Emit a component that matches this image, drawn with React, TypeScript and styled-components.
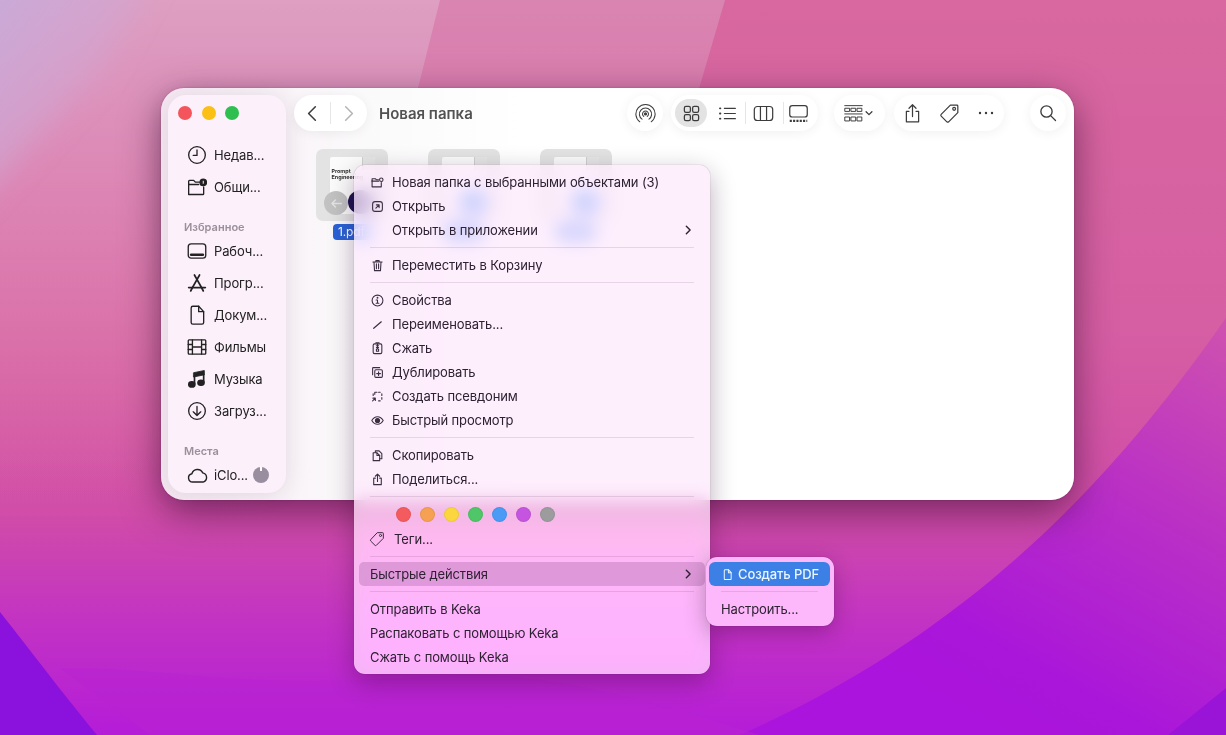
import React from "react";
import styled, { createGlobalStyle } from "styled-components";

const Global = createGlobalStyle`
  html, body { margin: 0; padding: 0; height: 100%; overflow: hidden; }
  body { font-family: "Inter", "Liberation Sans", sans-serif; letter-spacing: -0.12px; -webkit-font-smoothing: antialiased; }
  * { box-sizing: border-box; }
`;

const Desktop = styled.div`
  position: relative;
  width: 1226px;
  height: 735px;
  overflow: hidden;
  background: #c83cc0;
`;
const Wallpaper = styled.svg`
  position: absolute;
  inset: 0;
  width: 1226px;
  height: 735px;
`;
const Window = styled.div`
  position: absolute;
  left: 161px;
  top: 88px;
  width: 913px;
  height: 412px;
  display: flex;
  padding: 7px;
  border-radius: 23px;
  background: linear-gradient(90deg, #f6e9f3 0%, #fbfafb 22%, #ffffff 40%);
  box-shadow: 0 12px 38px rgba(30, 0, 30, 0.52), 0 0 2px rgba(60, 0, 60, 0.3);
`;
const Sidebar = styled.aside`
  width: 118px;
  height: 398px;
  flex: none;
  border-radius: 18px;
  background: #fcf0fa;
  box-shadow: 0 2px 22px rgba(60, 30, 60, 0.12);
  overflow: hidden;
`;
const Traffic = styled.div`
  height: 36px;
  display: flex;
  align-items: center;
  gap: 9.5px;
  padding-left: 10px;
  margin-bottom: 8px;
`;
const Light = styled.span<{ $c: string }>`
  width: 14px;
  height: 14px;
  border-radius: 50%;
  background: ${(p) => p.$c};
`;
const SideLabel = styled.div`
  height: 16px;
  margin-top: 16px;
  padding-left: 16px;
  line-height: 16px;
  font-size: 11px;
  font-weight: 600;
  letter-spacing: 0;
  color: #9a909c;
`;
const SideRow = styled.div`
  height: 32px;
  display: flex;
  align-items: center;
  gap: 6px;
  padding-left: 18px;
  font-size: 13px;
  color: #222;
  white-space: nowrap;
`;
const SideIcon = styled.span`
  width: 22px;
  flex: none;
  display: flex;
  justify-content: center;
  color: #222;
`;
const CloudPie = styled.span`
  width: 16px;
  height: 16px;
  margin-left: -1px;
  border-radius: 50%;
  background: conic-gradient(#fff 0 2%, #988e9f 2% 98%, #fff 98%);
`;
const Main = styled.main`
  flex: 1;
  min-width: 0;
  display: flex;
  flex-direction: column;
`;
const Toolbar = styled.div`
  height: 36px;
  padding: 0 1px 0 8px;
  display: flex;
  align-items: center;
`;
const Pill = styled.div<{ $ml?: number; $w?: number; $p?: string }>`
  height: 36px;
  border-radius: 18px;
  background: #fff;
  box-shadow: 0 2px 12px rgba(0, 0, 0, 0.06);
  display: flex;
  align-items: center;
  flex: none;
  color: #3a3a3a;
  margin-left: ${(p) => p.$ml ?? 0}px;
  width: ${(p) => (p.$w ? `${p.$w}px` : "auto")};
  padding: ${(p) => p.$p ?? "0"};
`;
const Title = styled.div`
  margin-left: 12px;
  flex: 1;
  font-size: 15px;
  font-weight: 600;
  letter-spacing: 0;
  color: #525252;
  white-space: nowrap;
`;
const Tool = styled.span<{ $w: number; $active?: boolean; $dim?: boolean; $pl?: number; $pr?: number }>`
  width: ${(p) => p.$w}px;
  height: 28px;
  flex: none;
  border-radius: 14px;
  display: flex;
  align-items: center;
  justify-content: center;
  padding-left: ${(p) => p.$pl ?? 0}px;
  padding-right: ${(p) => p.$pr ?? 0}px;
  background: ${(p) => (p.$active ? "#e3e3e3" : "transparent")};
  color: ${(p) => (p.$dim ? "#b4b4b4" : "#3c3c3c")};
`;
const ToolDivider = styled.span`
  width: 1px;
  height: 22px;
  margin: 0 1px 0 3px;
  background: #e6e6e6;
  flex: none;
`;
const Files = styled.div`
  display: flex;
  gap: 40px;
  margin-top: 18px;
  padding-left: 30px;
`;
const FileCell = styled.div`
  width: 72px;
  display: flex;
  flex-direction: column;
  align-items: center;
`;
const Tile = styled.div`
  position: relative;
  width: 72px;
  height: 72px;
  border-radius: 7px;
  background: #e3e3e3;
  display: flex;
  justify-content: center;
  padding-top: 8px;
`;
const Doc = styled.div`
  position: relative;
  width: 45px;
  height: 57px;
  background: #fbfbfb;
  border-radius: 2px;
  overflow: hidden;
  padding: 11px 0 0 2px;
  font-size: 5.4px;
  line-height: 6px;
  font-weight: 700;
  letter-spacing: 0;
  white-space: nowrap;
  color: #333;
`;
const Fold = styled.span`
  position: absolute;
  right: 0;
  top: 0;
  width: 13px;
  height: 13px;
  background: #e6e6e6;
  border-left: 1px solid #d0d0d0;
`;
const Blob = styled.span<{ $c: string }>`
  position: absolute;
  left: 18px;
  top: 33px;
  width: 26px;
  height: 24px;
  border-radius: 50%;
  background: ${(p) => p.$c};
`;
const BackBadge = styled.span`
  position: absolute;
  left: 8px;
  top: 42px;
  width: 24px;
  height: 24px;
  border-radius: 50%;
  background: #c2c2c2;
  color: #e4e4e4;
  display: flex;
  align-items: center;
  justify-content: center;
`;
const FileName = styled.div`
  margin-top: 3px;
  height: 16px;
  width: 38px;
  padding-left: 5px;
  border-radius: 4px;
  background: #2a62d6;
  color: #fff;
  font-size: 12px;
  line-height: 16px;
  white-space: nowrap;
  overflow: hidden;
`;
const Menu = styled.div`
  position: absolute;
  left: 354px;
  top: 165px;
  width: 356px;
  height: 509px;
  padding: 5px;
  border-radius: 11px;
  background: rgba(254, 233, 252, 0.74);
  backdrop-filter: blur(9px) saturate(1.6);
  box-shadow: 0 8px 26px rgba(40, 0, 40, 0.32), 0 0 1px rgba(40, 0, 40, 0.5);
  color: #2d2132;
  font-size: 13px;
`;
const Row = styled.div<{ $hi?: boolean; $pl?: number }>`
  height: 24px;
  display: flex;
  align-items: center;
  border-radius: 5px;
  padding: 0 12px 0 ${(p) => p.$pl ?? 11}px;
  white-space: nowrap;
  background: ${(p) => (p.$hi ? "rgba(120, 60, 120, 0.24)" : "transparent")};
`;
const RowIcon = styled.span`
  width: 22px;
  flex: none;
  display: flex;
  align-items: center;
  margin-left: -1px;
  margin-right: 1px;
  padding-left: 2px;
  color: #3a2e40;
`;
const TagIcon = styled(RowIcon)`
  padding-left: 0;
`;
const RowText = styled.span`
  flex: 1;
`;
const TagText = styled(RowText)`
  margin-left: 2px;
`;
const NoIconOffset = styled.div`
  padding-left: 22px;
`;
const Sep = styled.div`
  height: 1px;
  margin: 5px 11px;
  background: rgba(90, 50, 90, 0.14);
`;
const Dots = styled.div`
  height: 25px;
  display: flex;
  align-items: center;
  gap: 9px;
  padding-left: 36.5px;
`;
const Dot = styled.span<{ $c: string }>`
  width: 15px;
  height: 15px;
  border-radius: 50%;
  background: ${(p) => p.$c};
  box-shadow: inset 0 0 0 1px rgba(0, 0, 0, 0.06);
`;
const SubMenu = styled.div`
  position: absolute;
  left: 706px;
  top: 557px;
  width: 128px;
  height: 69px;
  padding: 5px 4px 5px 3px;
  border-radius: 11px;
  background: #fdb8fb;
  box-shadow: 0 6px 22px rgba(40, 0, 40, 0.3), 0 0 1px rgba(40, 0, 40, 0.5);
  color: #2d2132;
  font-size: 13px;
`;
const SubActive = styled.div`
  height: 24px;
  display: flex;
  align-items: center;
  gap: 5px;
  padding-left: 13px;
  border-radius: 6px;
  background: #3c80e6;
  color: #e8f6ff;
  white-space: nowrap;
  font-weight: 500;
`;
const SubSep = styled.div`
  height: 1px;
  margin: 5px 12px;
  background: rgba(90, 50, 90, 0.14);
`;
const SubRow = styled.div`
  height: 24px;
  display: flex;
  align-items: center;
  padding-left: 12px;
`;
const Svg = styled.svg<{ $s: number; $sw?: number }>`
  width: ${(p) => p.$s}px;
  height: ${(p) => p.$s}px;
  flex: none;
  fill: none;
  stroke: currentColor;
  stroke-width: ${(p) => p.$sw ?? 1.6};
  stroke-linecap: round;
  stroke-linejoin: round;
  display: block;
`;

type IP = { s: number; w?: number; children: React.ReactNode };
const I = ({ s, w, children }: IP) => (
  <Svg $s={s} $sw={w} viewBox="0 0 24 24">
    {children}
  </Svg>
);

const icons = {
  clock: <><circle cx="12" cy="12" r="10" /><path d="M12 6v6.5H7.5" /></>,
  shared: <><path d="M2 8.5V21h17a1 1 0 0 0 1-1V12" /><path d="M2 8.5V5a1 1 0 0 1 1-1h5l2 2.2h5" /><path d="M2 9h12" /><circle cx="19.5" cy="6.5" r="3.8" fill="currentColor" /><path d="M19.5 5v2.6" stroke="#fcf0fa" strokeWidth="1.2" /></>,
  desktop: <><rect x="1.5" y="3.5" width="21" height="17" rx="3.5" /><path d="M5 16.5h14" strokeWidth="3.2" /></>,
  apps: <><path d="M9 2.5l8.5 15M15 2.5L6.5 17.5" strokeWidth="2.2" /><path d="M2 17.5h20" strokeWidth="2" /><path d="M4.5 21.5l2-4M19.5 21.5l-2-4" strokeWidth="2.2" /></>,
  doc: <><path d="M5 3.5a2 2 0 0 1 2-2h7l6 6.5v13a2 2 0 0 1-2 2H7a2 2 0 0 1-2-2z" /><path d="M14 1.5V8h6" /></>,
  film: <><rect x="1.5" y="3.5" width="21" height="17" rx="1" /><path d="M6.5 3.5v17M17.5 3.5v17M1.5 9h5M1.5 15h5M17.5 9h5M17.5 15h5M6.5 12h11" /></>,
  music: <><path d="M9 18V8M20 16V6" strokeWidth="2" /><path d="M8.2 4.4L20.8 1.8V7L8.2 9.5z" fill="currentColor" strokeWidth="1" /><ellipse cx="5.8" cy="18.5" rx="3.8" ry="3.2" fill="currentColor" /><ellipse cx="16.8" cy="16.5" rx="3.8" ry="3.2" fill="currentColor" /></>,
  download: <><circle cx="12" cy="12" r="10" /><path d="M12 6.5v11M7.5 13l4.5 4.5 4.5-4.5" /></>,
  cloud: <path d="M6.5 19.5a4.8 4.8 0 0 1-.9-9.5 6.6 6.6 0 0 1 12.4-1 5.4 5.4 0 0 1 .4 10.5z" />,
  newFolder: <><path d="M2 9v11h17V12" /><path d="M2 9V5h6l2 2h4" /><path d="M2 9.5h12" /><circle cx="19" cy="7" r="3.2" /></>,
  open: <><rect x="3" y="3" width="18" height="18" rx="4.5" /><path d="M9 15l6-6M10 9h5v5" /></>,
  trash: <><path d="M3.5 5.5h17M9 5.5V3h6v2.5M5.5 5.5l1 16h11l1-16M10 9v9M14 9v9" /></>,
  info: <><circle cx="12" cy="12" r="10" /><path d="M12 11v6M9.5 17h5M9.5 11H12" /><circle cx="12" cy="7" r=".7" /></>,
  pen: <path d="M5 19L19 7" strokeWidth="2.2" />,
  zip: <><rect x="4" y="3.5" width="16" height="18" rx="2.5" /><path d="M12 3.5V12M10 7h4M10 10h4" /><rect x="10" y="13" width="4" height="4" /><path d="M9 1.5h6" /></>,
  dup: <><path d="M16 3H4a1 1 0 0 0-1 1v12" /><rect x="7" y="7" width="14" height="14" rx="2" /><path d="M14 10.5v7M10.5 14h7" /></>,
  alias: <><path d="M8 4h3M14 4h3M20 7v3M20 14v3M17 20h-3M7 8V4M4 7v3" /><path d="M3 20l5-5M3.5 15H8v4.5" /></>,
  eye: <><path d="M1.5 12S5.5 5 12 5s10.5 7 10.5 7-4 7-10.5 7S1.5 12 1.5 12z" /><circle cx="12" cy="12" r="3.8" fill="currentColor" /></>,
  copy: <><path d="M8 6V3.5h7l5 5V18h-4" /><path d="M4 7h7l5 5v9.5H4z" /><path d="M11 7v5h5" /></>,
  share: <><path d="M8 9.5H5v12h14v-12h-3" /><path d="M12 15.5V2.5M8 6l4-4 4 4" /></>,
  tag: <><path d="M13 2.5h7.5a1 1 0 0 1 1 1V11L11 21.5a1.5 1.5 0 0 1-2 0L2.5 15a1.5 1.5 0 0 1 0-2z" /><circle cx="17.3" cy="6.7" r="1.6" /></>,
  airdrop: <><path d="M8 18.5a7 7 0 1 1 8 0" /><path d="M5.5 21.5a11 11 0 1 1 13 0" /><path d="M10 15.3a3.4 3.4 0 1 1 4 0" /><circle cx="12" cy="12.5" r="1.2" fill="currentColor" /></>,
  grid: <><rect x="3" y="3" width="7.6" height="7.6" rx="2" /><rect x="13.4" y="3" width="7.6" height="7.6" rx="2" /><rect x="3" y="13.4" width="7.6" height="7.6" rx="2" /><rect x="13.4" y="13.4" width="7.6" height="7.6" rx="2" /></>,
  list: <><path d="M8 5.5h14M8 12h14M8 18.5h14" /><path d="M2.5 5.5h.5M2.5 12h.5M2.5 18.5h.5" strokeWidth="2.4" /></>,
  cols: <><rect x="1.5" y="4" width="21" height="16" rx="3.5" /><path d="M8.5 4v16M15.5 4v16" /></>,
  gallery: <><rect x="2" y="3" width="20" height="13" rx="3" /><path d="M2 20.5h20" strokeWidth="2.6" strokeDasharray="2.4 1.4" strokeLinecap="butt" /></>,
  sort: <><path d="M2 3h20M2 12.5h20" /><rect x="2.5" y="6" width="5" height="3.6" /><rect x="9.5" y="6" width="5" height="3.6" /><rect x="16.5" y="6" width="5" height="3.6" /><rect x="2.5" y="16" width="5" height="4.5" /><rect x="9.5" y="16" width="5" height="4.5" /><rect x="16.5" y="16" width="5" height="4.5" /></>,
  down: <path d="M5 9l7 7 7-7" strokeWidth="3" />,
  left: <path d="M16 2.5L6.5 12l9.5 9.5" strokeWidth="2.2" />,
  right: <path d="M8 2.5l9.5 9.5L8 21.5" strokeWidth="2.2" />,
  search: <><circle cx="10" cy="10" r="7.5" /><path d="M15.5 15.5L22 22" /></>,
  back: <path d="M21 12H4M10 5.5L3.5 12l6.5 6.5" strokeWidth="2.6" />,
  chev: <path d="M8 3l9 9-9 9" strokeWidth="3.4" />,
};
type IconName = keyof typeof icons;

const sideTop: [IconName, string][] = [["clock", "Недав..."], ["shared", "Общи..."]];
const sideFav: [IconName, string][] = [
  ["desktop", "Рабоч..."], ["apps", "Прогр..."], ["doc", "Докум..."],
  ["film", "Фильмы"], ["music", "Музыка"], ["download", "Загруз..."],
];
const tags = ["#f45b5f", "#f5a052", "#fbd63e", "#4fc668", "#4a9af6", "#c555e0", "#9c9c9e"];

const SideItem = ({ icon, text }: { icon: IconName; text: string }) => (
  <SideRow>
    <SideIcon><I s={20}>{icons[icon]}</I></SideIcon>
    {text}
  </SideRow>
);

const MenuItem = ({ icon, text, chevron, hi }: { icon?: IconName; text: string; chevron?: boolean; hi?: boolean }) => (
  <Row $hi={hi}>
    {icon && <RowIcon><I s={13} w={2}>{icons[icon]}</I></RowIcon>}
    <RowText>{text}</RowText>
    {chevron && <I s={10}>{icons.chev}</I>}
  </Row>
);

export default function App() {
  return (
    <Desktop>
      <Global />
      <Wallpaper viewBox="0 0 1226 735" preserveAspectRatio="none">
        <defs>
          <linearGradient id="base" x1="0" y1="0" x2="0" y2="1">
            <stop offset="0" stopColor="#d8689f" />
            <stop offset="0.45" stopColor="#d65ea3" />
            <stop offset="0.7" stopColor="#d04ca8" />
            <stop offset="0.85" stopColor="#c232c4" />
            <stop offset="1" stopColor="#b41cd8" />
          </linearGradient>
          <linearGradient id="corner" x1="0" y1="0" x2="0.9" y2="0.9">
            <stop offset="0" stopColor="#c2aee0" />
            <stop offset="1" stopColor="#dca0c8" stopOpacity="0.3" />
          </linearGradient>
          <linearGradient id="band1" x1="0" y1="0" x2="0" y2="1">
            <stop offset="0" stopColor="#dd9fc2" />
            <stop offset="0.3" stopColor="#dd8cb8" stopOpacity="0.9" />
            <stop offset="1" stopColor="#dd70a8" stopOpacity="0" />
          </linearGradient>
          <linearGradient id="band2" x1="0" y1="0" x2="0" y2="1">
            <stop offset="0" stopColor="#d985b2" />
            <stop offset="0.45" stopColor="#da78ac" stopOpacity="0.7" />
            <stop offset="1" stopColor="#d9699f" stopOpacity="0" />
          </linearGradient>
          <linearGradient id="rightWedge" gradientUnits="userSpaceOnUse" x1="1226" y1="320" x2="1000" y2="730">
            <stop offset="0" stopColor="#cf52ae" />
            <stop offset="0.4" stopColor="#bb32c4" />
            <stop offset="0.85" stopColor="#aa16da" />
            <stop offset="1" stopColor="#aa14dc" />
          </linearGradient>
          <filter id="soft" x="-30%" y="-30%" width="160%" height="160%">
            <feGaussianBlur stdDeviation="14" />
          </filter>
        </defs>
        <rect width="1226" height="735" fill="url(#base)" />
        <path d="M0 0H725L684 140 640 340 560 500H0z" fill="url(#band2)" />
        <path d="M0 0H440L405 140 330 340 260 520H0z" fill="url(#band1)" />
        <path d="M-40 -40H160L100 70 -40 220z" fill="url(#corner)" filter="url(#soft)" />
        <path d="M1226 318C1140 440 1000 620 740 735H1226z" fill="url(#rightWedge)" />
        <path d="M60 668C160 668 230 685 360 680S520 660 760 735H150z" fill="#b822d2" fillOpacity="0.55" />
        <path d="M1226 688L1168 735H1226z" fill="#9a14d8" />
        <path d="M0 612C34 655 60 690 97 735H0z" fill="#8b12dc" />
      </Wallpaper>

      <Window>
        <Sidebar>
          <Traffic>
            <Light $c="#f4555c" />
            <Light $c="#fbc016" />
            <Light $c="#2fbf50" />
          </Traffic>
          {sideTop.map(([i, t]) => <SideItem key={t} icon={i} text={t} />)}
          <SideLabel>Избранное</SideLabel>
          {sideFav.map(([i, t]) => <SideItem key={t} icon={i} text={t} />)}
          <SideLabel>Места</SideLabel>
          <SideRow>
            <SideIcon><I s={21}>{icons.cloud}</I></SideIcon>
            iClo...
            <CloudPie />
          </SideRow>
        </Sidebar>
        <Main>
          <Toolbar>
            <Pill $w={73}>
              <Tool $w={33} $pl={3}><I s={17}>{icons.left}</I></Tool>
              <ToolDivider />
              <Tool $w={32} $dim><I s={17}>{icons.right}</I></Tool>
            </Pill>
            <Title>Новая папка</Title>
            <Pill $w={36}><Tool $w={36}><I s={21} w={1.2}>{icons.airdrop}</I></Tool></Pill>
            <Pill $ml={8} $p="0 3px 0 4px">
              <Tool $w={32} $active><I s={19}>{icons.grid}</I></Tool>
              <Tool $w={35} $pl={5}><I s={19} w={1.4}>{icons.list}</I></Tool>
              <ToolDivider />
              <Tool $w={33}><I s={21} w={1.4}>{icons.cols}</I></Tool>
              <ToolDivider />
              <Tool $w={30} $pr={3}><I s={21} w={1.4}>{icons.gallery}</I></Tool>
            </Pill>
            <Pill $ml={16} $w={51} $p="0 0 0 9px">
              <I s={21} w={1.1}>{icons.sort}</I>
              <I s={10}>{icons.down}</I>
            </Pill>
            <Pill $ml={9} $w={110}>
              <Tool $w={36}><I s={21} w={1.4}>{icons.share}</I></Tool>
              <Tool $w={38}><I s={21} w={1.4}>{icons.tag}</I></Tool>
              <Tool $w={36}><I s={18} w={3.2}><path d="M4 12h.01M12 12h.01M20 12h.01" /></I></Tool>
            </Pill>
            <Pill $ml={26} $w={36}><Tool $w={36}><I s={18} w={1.8}>{icons.search}</I></Tool></Pill>
          </Toolbar>
          <Files>
            <FileCell>
              <Tile>
                <Doc>
                  Prompt<br />Engineering
                  <Fold />
                  <Blob $c="#1e1550" />
                </Doc>
                <BackBadge><I s={13}>{icons.back}</I></BackBadge>
              </Tile>
              <FileName>1.pdf</FileName>
            </FileCell>
            {["2.pdf", "3.pdf"].map((n) => (
              <FileCell key={n}>
                <Tile>
                  <Doc><Fold /><Blob $c="#3f78e0" /></Doc>
                </Tile>
                <FileName>{n}</FileName>
              </FileCell>
            ))}
          </Files>
        </Main>
      </Window>

      <Menu>
        <MenuItem icon="newFolder" text="Новая папка с выбранными объектами (3)" />
        <MenuItem icon="open" text="Открыть" />
        <NoIconOffset><MenuItem text="Открыть в приложении" chevron /></NoIconOffset>
        <Sep />
        <MenuItem icon="trash" text="Переместить в Корзину" />
        <Sep />
        <MenuItem icon="info" text="Свойства" />
        <MenuItem icon="pen" text="Переименовать..." />
        <MenuItem icon="zip" text="Сжать" />
        <MenuItem icon="dup" text="Дублировать" />
        <MenuItem icon="alias" text="Создать псевдоним" />
        <MenuItem icon="eye" text="Быстрый просмотр" />
        <Sep />
        <MenuItem icon="copy" text="Скопировать" />
        <MenuItem icon="share" text="Поделиться..." />
        <Sep />
        <Dots>{tags.map((c) => <Dot key={c} $c={c} />)}</Dots>
        <Row>
          <TagIcon><I s={16} w={1.5}>{icons.tag}</I></TagIcon>
          <TagText>Теги...</TagText>
        </Row>
        <Sep />
        <MenuItem text="Быстрые действия" chevron hi />
        <Sep />
        <MenuItem text="Отправить в Keka" />
        <MenuItem text="Распаковать с помощью Keka" />
        <MenuItem text="Сжать с помощь Keka" />
      </Menu>

      <SubMenu>
        <SubActive>
          <I s={11} w={2.2}>{icons.doc}</I>
          Создать PDF
        </SubActive>
        <SubSep />
        <SubRow>Настроить...</SubRow>
      </SubMenu>
    </Desktop>
  );
}
